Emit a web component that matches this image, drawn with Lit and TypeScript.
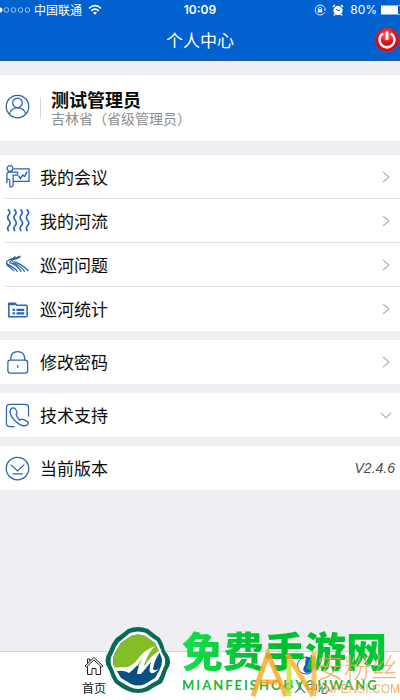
import { LitElement, html, css, svg, nothing, TemplateResult } from "lit";
import { customElement, property } from "lit/decorators.js";

const glyphs: Record<string, TemplateResult> = {
  user: svg`<circle cx="13" cy="13" r="11.7"/><circle cx="13" cy="9.2" r="5"/><path d="M4.5 21C5.5 16 9 14.3 13 14.3S20.5 16 21.5 21"/>`,
  meeting: svg`<circle cx="5.2" cy="4.6" r="3"/><path d="M9 5H25V18H9M2 20V11Q2 8.5 5 8.5H13V11.5H8.5V22Q7 25 5 23.5V17M2 11V16H5"/><path stroke-width="1.5" d="M14 12L16 15L18.5 11.5L20.5 13L23 8"/>`,
  rivers: svg`<path stroke-width="1.7" d="M3 1.5q3.5 2.8 1 5.6t0 5.7t0 5.7t0 5.5M9.5 1.5q3.5 2.8 1 5.6t0 5.7t0 5.7t0 5.5M16 1.5q3.5 2.8 1 5.6t0 5.7t0 5.7t0 5.5M22.5 1.5q3.5 2.8 1 5.6t0 5.7t0 5.7t0 5.5"/>`,
  stream: svg`<path d="M14 5.5C7 6.5 2 8 1.5 11C2 14 10 15 13 20.5M13 6.5C8 8 4.5 9 5 11C11 13 14 15 17 20.5M8 9.5C7 11.5 16 13 20.5 20.5M10 9.5C10 11 18 12 24.5 20M1.5 12C2 15 7 16 9.5 20"/><path stroke-width="2.2" d="M8 7.5L11 5M12 6.5L16 4.5"/>`,
  folder: svg`<path stroke-width="1.6" d="M4 20.5V6.5H10.5L12.5 8.5H22Q23 8.5 23 9.5V19.5Q23 20.5 22 20.5Z"/><path stroke-width="2.4" d="M4 7.5H11M8 13.3H10.5M12 13.3H20M8 17H10.5M12 17H20"/>`,
  lock: svg`<rect x="3" y="10.5" width="20.5" height="13.5" rx="2.5"/><path d="M6 10.5V8.5Q6.5 1.6 13.2 1.6T20.5 8.5V10.5M13.3 15.5V18.5"/>`,
  phone: svg`<path d="M10 24.5H5Q1.5 24.5 1.5 21V5Q1.5 1.5 5 1.5H21Q24.5 1.5 24.5 5V14"/><path d="M7 5.5Q9 4.5 10.5 6L12.5 9Q13 10.5 11.5 12Q12.5 15.5 15.5 18Q17.5 16.5 19 17L23.5 19.5Q25 21 23.5 22.5Q20 25 15.5 22.5Q8 18 5.5 11Q4.5 7.5 7 5.5Z"/>`,
  version: svg`<circle cx="13" cy="13" r="11.7"/><path d="M6 9L13 15.5L20 9M8 18.5H18.5"/>`,
};

@customElement("menu-row")
export class MenuRow extends LitElement {
  static styles = css`
    :host { display: block; }
    :host(:not(:last-of-type)) .body { border-bottom: 1px solid #e2e2e5; }
    .row {
      display: block; box-sizing: border-box; width: 100%; padding: 0 0 0 5px; border: 0; background: none;
      font: inherit; color: #0b0b0b; text-align: left; text-decoration: none;
    }
    .body { display: flex; align-items: center; box-sizing: border-box; height: 44px; padding-right: 5px; }
    .glyph { width: 25px; height: 25px; fill: none; stroke: #2864b0; stroke-width: 1.3; }
    .label { flex: 1; margin-left: 10px; font-size: 17px; line-height: 24px; }
    .arrow { width: 18px; height: 18px; fill: none; stroke: #b4b4b8; stroke-width: 1.2; }
    .value { font: italic 14px/20px "Liberation Sans", Arial, sans-serif; color: #4c4c4c; }
  `;
  @property() icon = "";
  @property() label = "";
  @property() value = "";
  @property() arrow = "";

  render() {
    const body = html`
      <span class="body">
        <svg class="glyph" viewBox="0 0 26 26" aria-hidden="true">${glyphs[this.icon]}</svg>
        <span class="label">${this.label}</span>
        ${this.value ? html`<span class="value">${this.value}</span>` : nothing}
        ${this.arrow
          ? html`<svg class="arrow" viewBox="0 0 18 18" aria-hidden="true">
              ${this.arrow === "down" ? svg`<path d="M4 7L9 12L14 7"/>` : svg`<path d="M6 4L12 9L6 14"/>`}
            </svg>`
          : nothing}
      </span>`;
    if (this.arrow === "down") return html`<button class="row" type="button" aria-expanded="false">${body}</button>`;
    if (this.arrow) return html`<a class="row" href="#${this.icon}">${body}</a>`;
    return html`<div class="row">${body}</div>`;
  }
}

@customElement("app-root")
export class AppRoot extends LitElement {
  static styles = css`
    :host {
      display: flex; flex-direction: column; position: relative; min-height: 100vh; overflow: hidden;
      background: #eeeef3; color: #0b0b0b;
      font-family: "Noto Sans CJK SC", sans-serif;
    }
    .top { background: #0061cf; color: #fff; border-bottom: 1px solid #2a5796; }
    .status {
      display: grid; grid-template-columns: 1fr auto 1fr; align-items: center; height: 20px;
      font-size: 12px; line-height: 20px;
    }
    .side { display: flex; align-items: center; }
    .dots { width: 34px; height: 8px; }
    .wifi { width: 14px; height: 12px; margin-left: 6px; }
    .time { font: 600 12px/20px "Inter", "Liberation Sans", sans-serif; }
    .right { justify-content: flex-end; font-family: "Inter", "Liberation Sans", sans-serif; }
    .small { width: 12px; height: 12px; margin-right: 6px; }
    .battery { width: 20px; height: 10px; margin-left: 3px; }
    .bar { display: grid; grid-template-columns: 1fr auto 1fr; align-items: center; height: 40px; }
    .title { grid-column: 2; margin: 0; font-size: 17px; line-height: 24px; font-weight: 400; }
    .power { justify-self: end; padding: 0; border: 0; background: none; width: 26px; height: 26px; }
    .power svg { display: block; width: 26px; height: 26px; }
    main { flex: 1; display: flex; flex-direction: column; gap: 9px; padding: 14px 0; }
    .card { background: #fff; }
    .profile { display: flex; align-items: center; height: 66px; padding-left: 5px; margin-bottom: 5px; }
    .avatar { width: 25px; height: 25px; margin-bottom: 4px; fill: none; stroke: #2864b0; stroke-width: 1.3; }
    .rule { width: 1px; height: 22px; margin: 0 10px; background: #d6d6da; }
    .name { margin: 0; font-size: 18px; line-height: 20px; font-weight: 700; }
    .role { margin: 0; font-size: 14px; line-height: 18px; color: #8d8d8d; }
    .tabs {
      display: grid; grid-template-columns: 1fr 1fr; gap: 24px; height: 48px;
      background: #fff; border-top: 1px solid #d4d4d8;
    }
    .tab {
      display: flex; flex-direction: column; align-items: center; padding-top: 4px; gap: 4px;
      font-size: 12px; line-height: 16px; color: #151515; text-decoration: none;
    }
    .tab svg { width: 20px; height: 20px; }
    .current { color: #1648a5; }
    .marks { position: absolute; left: 0; right: 0; bottom: 0; height: 75px; pointer-events: none; }
    .fans { position: absolute; right: 0; bottom: 0; display: flex; align-items: flex-end; }
    .fans svg { position: relative; z-index: 1; width: 68px; height: 52px; opacity: 0.8; }
    .fantext { padding-bottom: 4px; opacity: 0.85; }
    .fanname { font-size: 27px; line-height: 30px; font-weight: 300; color: #f2a45c; white-space: nowrap; }
    .fansite { font: 12px/14px "Liberation Sans", Arial, sans-serif; color: #f2a45c; }
    .game { position: absolute; left: 104px; bottom: 5px; display: flex; gap: 10px; }
    .emblem { width: 68px; height: 68px; }
    .gametext { display: flex; flex-direction: column; }
    .gamename {
      font-size: 41px; line-height: 44px; padding-bottom: 6px; font-weight: 900; white-space: nowrap;
      background: linear-gradient(90deg, #17df4c, #00bd2f 40%, #00c830);
      -webkit-background-clip: text; background-clip: text; color: transparent;
    }
    .gamesite { font: bold 13px/16px "Lato", sans-serif; letter-spacing: 2px; color: #18ba35; }
  `;

  render() {
    return html`
      <header class="top">
        <div class="status">
          <div class="side">
            <svg class="dots" viewBox="0 0 34 8" fill="none" stroke="#9cc4f4">
              <circle cx="0" cy="4" r="2.5" fill="#fff" stroke="none"/>
              ${[6.5, 13.5, 20.5, 27.5].map((x) => svg`<circle cx=${x} cy="4" r="2.3"/>`)}
            </svg>
            <span>中国联通</span>
            <svg class="wifi" viewBox="0 0 14 12" fill="none" stroke="#fff" stroke-width="1.6">
              <path d="M1 4.3Q7 -1 13 4.3M3.3 6.8Q7 3.5 10.7 6.8"/><path d="M5 8.7Q7 7 9 8.7L7 10.8Z" fill="#fff" stroke="none"/>
            </svg>
          </div>
          <span class="time">10:09</span>
          <div class="side right">
            <svg class="small" viewBox="0 0 12 12" fill="none" stroke="#e8f1ff">
              <path d="M10.5 3.5A5 5 0 1 0 10.5 8.5M11 4V7M4.5 5.5V4Q6 2 7.5 4V5.5"/><rect x="3.8" y="5.3" width="4.4" height="3.2" fill="#fff" stroke="none"/>
            </svg>
            <svg class="small" viewBox="0 0 12 12" fill="none" stroke="#fff">
              <circle cx="6" cy="6.5" r="4.2" fill="#fff"/><path d="M1 3L3 1M9 1L11 3M3 10L2 11.5M9 10L10 11.5" stroke-width="1.4"/><path d="M4 5L6 6.8L8 6" stroke="#0061cf"/>
            </svg>
            <span>80%</span>
            <svg class="battery" viewBox="0 0 20 10"><rect width="17" height="9" y="0.5" x="1" fill="#fff"/><path d="M18 .5H20M18 9.5H20" stroke="#9cc4f4"/></svg>
          </div>
        </div>
        <div class="bar">
          <h1 class="title">个人中心</h1>
          <button class="power" type="button" aria-label="退出">
            <svg viewBox="0 0 26 26" fill="none">
              <defs><radialGradient id="red" cy=".3"><stop offset="0" stop-color="#ff7d70"/><stop offset=".6" stop-color="#e5141a"/><stop offset="1" stop-color="#c9101a"/></radialGradient></defs>
              <circle cx="13" cy="13" r="12" fill="url(#red)" stroke="#a9364c"/>
              <path d="M9 6.5A7.5 7.5 0 1 0 17 6.5M13 4.5V13" stroke="#fff" stroke-width="2.6"/>
            </svg>
          </button>
        </div>
      </header>
      <main>
        <section class="card profile">
          <svg class="avatar" viewBox="0 0 26 26" aria-hidden="true">${glyphs.user}</svg>
          <span class="rule"></span>
          <div>
            <h2 class="name">测试管理员</h2>
            <p class="role">吉林省（省级管理员）</p>
          </div>
        </section>
        <section class="card">
          <menu-row icon="meeting" label="我的会议" arrow="right"></menu-row>
          <menu-row icon="rivers" label="我的河流" arrow="right"></menu-row>
          <menu-row icon="stream" label="巡河问题" arrow="right"></menu-row>
          <menu-row icon="folder" label="巡河统计" arrow="right"></menu-row>
        </section>
        <section class="card"><menu-row icon="lock" label="修改密码" arrow="right"></menu-row></section>
        <section class="card"><menu-row icon="phone" label="技术支持" arrow="down"></menu-row></section>
        <section class="card"><menu-row icon="version" label="当前版本" value="V2.4.6"></menu-row></section>
      </main>
      <nav class="tabs">
        <a class="tab" href="#home">
          <svg viewBox="0 0 20 20" fill="none" stroke="#222"><path d="M1 10L10 1.5L19 10L17.5 11L10 4L2.5 11ZM3.5 10.5V18.5H8V12.5H12V18.5H16.5V10.5M3.5 7V3H6V5"/></svg>
          <span>首页</span>
        </a>
        <a class="tab current" href="#me" aria-current="page">
          <svg viewBox="0 0 20 20"><circle cx="10" cy="9.5" r="8.5" fill="none" stroke="#1a55c0"/><path d="M10 1Q18 1 18 8Q18 17 10 17Q5 14 9 9Z" fill="#1a55c0"/></svg>
          <span>个人中心</span>
        </a>
      </nav>
      <div class="marks">
        <div class="game">
          <svg class="emblem" viewBox="0 0 68 68">
            <path d="M24 2Q34 -2 44 2Q50 7 56 11Q60 18 61 24Q70 34 63 43Q61 50 58 56Q50 60 44 64Q34 68 24 64Q17 61 11 56Q7 50 5 43Q-2 34 5 24Q7 17 12 11Q18 7 24 2Z" fill="#086956"/>
            <path d="M26 6Q34 3 42 6Q48 11 53 14Q56 20 58 26Q64 34 59 42Q57 48 54 53Q48 56 42 60Q34 64 26 60Q20 57 14 53Q11 48 9 42Q4 34 9 26Q11 20 15 15Q20 11 26 6Z" fill="#fff"/>
            <path d="M27 9Q34 6 41 9L51 16L56 27Q60 34 56 42L51 51L41 57Q34 60 27 57L17 51L11 41Q7 34 11 26L17 16Z" fill="#075083"/>
            <path d="M27 9Q34 6 41 9L51 16L55 24L44 34L36 40L30 38Q23 44 10 41Q8 33 11 26L17 16Z" fill="#83be25"/>
            <path d="M9 39Q13 42 16 40Q26 42 33 33Q40 23 51 19Q43 27 40 39Q47 28 58 22Q50 33 49 42Q51 45 55 41Q51 47 47 46Q44 45 47 35L37 47H33Q34 39 40 29Q33 40 25 46Q20 43 13 44Z" fill="#fff"/>
          </svg>
          <div class="gametext"><span class="gamename">免费手游网</span><span class="gamesite">MIANFEISHOUYOUWANG</span></div>
        </div>
        <div class="fans">
          <svg viewBox="0 0 68 52" fill="none" stroke-width="5">
            <path d="M4 48L19 6L37 48M12 34H28" stroke="#ffa51c"/><path d="M40 48V8" stroke="#c5e62d"/><path d="M38 6L64 48" stroke="#ffae25"/><path d="M65 4V48" stroke="#ffb340"/>
          </svg>
          <div class="fantext"><div class="fanname">安粉丝</div><div class="fansite">ANFENSI.COM</div></div>
        </div>
      </div>
    `;
  }
}
